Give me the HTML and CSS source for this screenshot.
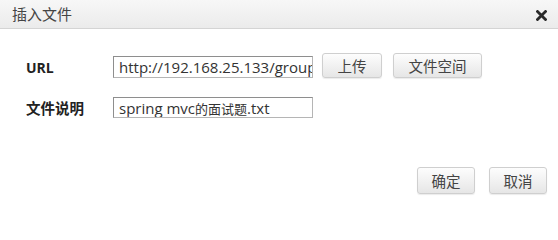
FILE: index.html
```html
<!DOCTYPE html>
<html>
<head>
<meta charset="utf-8">
<link rel="stylesheet" href="styles.css">
</head>
<body>
<div class="dialog">
  <div class="titlebar">
    <span class="title">插入文件</span>
    <span class="close">
      <svg width="11" height="11" viewBox="0 0 11 11"><path d="M1.5 1.5 L9.5 9.5 M9.5 1.5 L1.5 9.5" stroke="#2a2a2a" stroke-width="2.8" stroke-linecap="square"/></svg>
    </span>
  </div>
  <div class="body">
    <div class="row row-url">
      <label class="label">URL</label>
      <div class="field">
        <div class="input">http://192.168.25.133/group</div>
        <button class="btn btn-upload">上传</button>
        <button class="btn btn-space">文件空间</button>
      </div>
    </div>
    <div class="row row-desc">
      <label class="label">文件说明</label>
      <div class="field">
        <div class="input">spring mvc<span class="cjk">的面试题</span>.txt</div>
      </div>
    </div>
  </div>
  <div class="footer">
    <button class="btn btn-ok">确定</button>
    <button class="btn btn-cancel">取消</button>
  </div>
</div>
</body>
</html>
```

FILE: styles.css
```css
html, body {
  margin: 0;
  padding: 0;
  background: #ffffff;
}
.dialog {
  width: 558px;
  height: 211px;
  background: #fff;
  font-family: "Noto Sans CJK SC", "Open Sans", sans-serif;
  color: #333;
  box-sizing: border-box;
}
.titlebar {
  height: 28px;
  border-bottom: 1px solid #d4d4d4;
  background: linear-gradient(#f7f7f7, #ebebeb);
  display: flex;
  align-items: center;
  justify-content: space-between;
  padding: 0 11px 0 12px;
  box-sizing: content-box;
}
.title {
  font-size: 15px;
  color: #444;
  line-height: 28px;
}
.close {
  display: flex;
  width: 11px;
  height: 11px;
  margin-top: 2px;
}
.body {
  padding: 27px 0 0 26px;
}
.row {
  display: flex;
  align-items: center;
}
.row-desc {
  margin-top: 19px;
}
.label {
  width: 87px;
  font-weight: bold;
  font-size: 14.5px;
  color: #222;
  font-family: "Noto Sans CJK SC", "Open Sans", sans-serif;
}
.row-url .label {
  font-family: "Open Sans", "Noto Sans CJK SC", sans-serif;
  font-size: 14px;
}
.field {
  display: flex;
  align-items: center;
}
.input {
  width: 193px;
  height: 20px;
  border: 1px solid #b5b5b5;
  border-top-color: #8e8e8e;
  border-left-color: #8e8e8e;
  padding: 0 0 0 5px;
  font-family: "Open Sans", "Noto Sans CJK SC", sans-serif;
  font-size: 15px;
  line-height: 21px;
  color: #333;
  white-space: nowrap;
  overflow: hidden;
}
.cjk {
  font-family: "Noto Sans CJK SC", sans-serif;
  font-size: 13px;
}
.row-desc .input {
  height: 19px;
}
.btn {
  height: 25px;
  border: 1px solid #cfcfcf;
  border-radius: 3px;
  background: linear-gradient(#fdfdfd, #e6e6e6);
  box-shadow: 0 1px 1px rgba(0,0,0,0.08);
  font-family: "Noto Sans CJK SC", sans-serif;
  font-size: 14.5px;
  color: #444;
  padding: 0;
  line-height: 22px;
}
.btn-upload {
  width: 60px;
  margin-left: 9px;
  margin-top: -3px;
}
.btn-space {
  width: 89px;
  margin-left: 11px;
  margin-top: -3px;
}
.footer {
  display: flex;
  justify-content: flex-end;
  padding: 49px 11px 0 0;
  gap: 14px;
}
.btn-ok, .btn-cancel {
  width: 58px;
  height: 27px;
}
```
